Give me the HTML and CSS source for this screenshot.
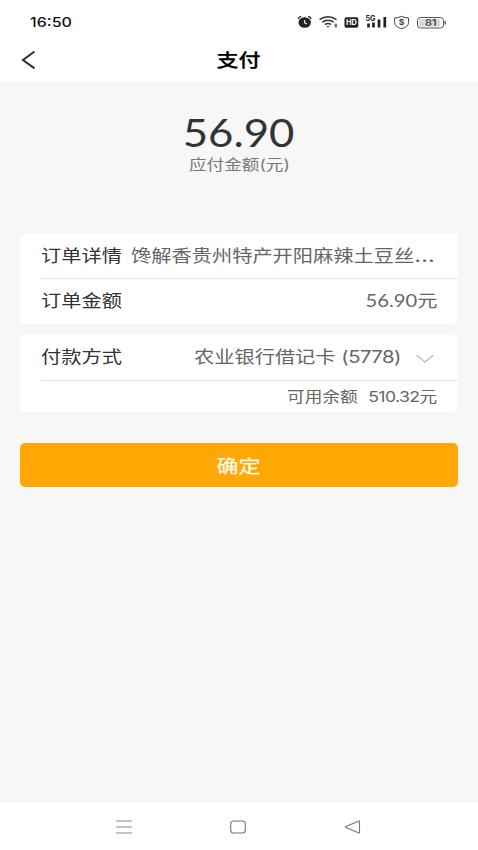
FILE: index.html
```html
<!DOCTYPE html>
<html lang="zh-CN">
<head>
<meta charset="utf-8">
<title>支付</title>
<link rel="stylesheet" href="styles.css">
</head>
<body>
<header class="top">
  <div class="status">
    <span class="wide clock">16:50</span>
    <svg class="status-icons" width="152" height="18" viewBox="0 0 152 18">
      <g fill="#222" stroke="none">
        <ellipse cx="8.7" cy="9.5" rx="6.2" ry="5.2"/>
        <path d="M2.300 6Q2.800 3.700 5.300 3.300M15.100 6Q14.600 3.700 12.100 3.300" fill="none" stroke="#222" stroke-width="1.300"/>
        <path d="M8.700 7v3l2.300 1" fill="none" stroke="#fff" stroke-width="1.100"/>
      </g>
      <g fill="none" stroke="#333" stroke-width="1.600">
        <path d="M23.500 6.600Q32 0.800 40.500 6.600"/>
        <path d="M26.300 9.200Q32 5.200 37.700 9.200"/>
        <path d="M29 11.700Q32 9.400 35 11.700"/>
      </g>
      <path d="M30.300 13h3.400L32 14.600z" fill="#333"/>
      <rect x="38.500" y="10.500" width="2.600" height="4" rx="1" fill="#777"/>
      <rect x="48.500" y="4.300" width="13.800" height="10.400" rx="1.800" fill="#222"/>
      <text class="hd" x="50" y="12.300" textLength="10.900" lengthAdjust="spacingAndGlyphs">HD</text>
      <text class="g5" x="69.500" y="8" textLength="10" lengthAdjust="spacingAndGlyphs">5G</text>
      <path d="M72.500 10.500v4M77.500 9.500v5M83 6.500v8M88.800 4v10.500" fill="none" stroke="#222" stroke-width="2.700"/>
      <path d="M105.500 3.300Q109 5 112.600 5V9.500Q112.600 13.700 105.500 15.700Q98.600 13.700 98.600 9.500V5Q102 5 105.500 3.300z" fill="none" stroke="#444" stroke-width="1"/>
      <text class="shield" x="102.800" y="12.400" textLength="5.600" lengthAdjust="spacingAndGlyphs">$</text>
      <rect x="121.500" y="4.500" width="26" height="10.500" rx="3" fill="#fff" stroke="#555"/>
      <rect x="123" y="6" width="21" height="7.500" rx="1.500" fill="#d8d8d8"/>
      <path d="M149.200 8v3.500" stroke="#555" stroke-width="1.300"/>
      <text class="pct" x="129" y="13" textLength="11.500" lengthAdjust="spacingAndGlyphs">81</text>
    </svg>
  </div>
  <div class="titlebar">
    <svg class="back" width="16" height="20" viewBox="0 0 16 20"><path d="M14.500 1.500L3 10L14.500 18.300" fill="none" stroke="#333" stroke-width="2.100"/></svg>
    <h1 class="wide title">支付</h1>
  </div>
</header>
<main class="content">
  <section class="amount">
    <div class="wide total">56.90</div>
    <div class="wide caption">应付金额(元)</div>
  </section>
  <section class="card order">
    <div class="row detail">
      <span class="wide label">订单详情</span>
      <span class="wide value goods">馋解香贵州特产开阳麻辣土豆丝<span class="dots">…</span></span>
    </div>
    <div class="row sum">
      <span class="wide label">订单金额</span>
      <span class="wide value right"><span class="num">56.90</span>元</span>
    </div>
  </section>
  <section class="card method">
    <div class="row bank">
      <span class="wide label">付款方式</span>
      <span class="wide value right bankname">农业银行借记卡 <span class="account">(5778)</span></span>
      <svg class="chevron" width="20" height="10" viewBox="0 0 20 10"><path d="M1.500 1L10 8L18.500 1" fill="none" stroke="#bdbdbd" stroke-width="1.400"/></svg>
    </div>
    <div class="row balance">
      <span class="wide value right small"><span class="balance-label">可用余额</span><span class="balance-num">510.32</span>元</span>
    </div>
  </section>
  <button class="confirm"><span class="wide">确定</span></button>
</main>
<nav class="sysnav">
  <svg width="18" height="16" viewBox="0 0 18 16"><path d="M1 2h16M1 8h16M1 14h16" fill="none" stroke="#8a8a8a" stroke-width="1.100"/></svg>
  <svg width="18" height="16" viewBox="0 0 18 16"><rect x="1.700" y="2" width="14.600" height="12" rx="3" fill="none" stroke="#777" stroke-width="1.100"/></svg>
  <svg width="18" height="16" viewBox="0 0 18 16"><path d="M15.500 2.200V13.800Q15.500 14.200 15 14L1.800 8.500Q1 8 1.800 7.500L15 2Q15.500 1.800 15.500 2.200z" fill="none" stroke="#777" stroke-width="1.100"/></svg>
</nav>
</body>
</html>
```
FILE: styles.css
```css
* { box-sizing: border-box; }
body {
  margin: 0;
  height: 850px;
  display: flex;
  flex-direction: column;
  overflow: hidden;
  background: #f7f7f7;
  color: #333;
  font-family: Inter, "Noto Sans CJK SC", sans-serif;
}
/* The interface type is set wider than its natural proportions. */
.wide {
  display: inline-block;
  white-space: nowrap;
  transform: scaleX(1.19);
  transform-origin: left center;
}
.top { height: 82px; background: #fff; }
.status {
  height: 40px;
  padding: 4px 30px 0 30px;
  display: flex;
  align-items: center;
  justify-content: space-between;
}
.clock { font-size: 13.5px; font-weight: 500; color: #111; transform: scaleX(1.19); }
.status-icons { flex: none; margin: -1px 0.5px 0 0; }
.hd { font: bold 7.5px Inter, sans-serif; fill: #fff; }
.g5 { font: bold 7.5px Inter, sans-serif; fill: #222; }
.shield { font: bold 8px Inter, sans-serif; fill: #444; }
.pct { font: 500 9px Inter, sans-serif; fill: #333; }
.titlebar {
  height: 40px;
  padding: 0 20px;
  display: grid;
  grid-template-columns: 1fr auto 1fr;
  align-items: center;
}
.title {
  margin: 0;
  font-size: 18.5px;
  line-height: 28px;
  font-weight: 500;
  color: #000;
  -webkit-text-stroke: 0.25px #000;
  transform-origin: center;
}
.content { flex: 1; padding: 0 20px; }
.amount {
  height: 152px;
  padding-top: 28px;
  display: flex;
  flex-direction: column;
  align-items: center;
}
.amount .wide { transform-origin: center; }
.amount .total {
  font-family: Lato, sans-serif;
  font-size: 38px;
  line-height: 44px;
  transform: scaleX(1.15);
}
.caption { font-size: 14.8px; line-height: 22px; color: #777; }
.card { background: #fff; border-radius: 5px; padding-left: 21px; }
.order { height: 90px; }
.row {
  height: 45px;
  padding-right: 21px;
  display: flex;
  align-items: center;
  font-size: 17px;
  line-height: 24px;
}
.detail { padding-bottom: 0; border-bottom: 1px solid #e6e6e6; gap: 22px; }
.sum { padding-bottom: 2px; }
.label { color: #333; }
.value { color: #666; }
.dots { font-size: 20px; line-height: 1; }
.right { margin-left: auto; transform-origin: right center; }
.num { font-family: Lato, sans-serif; }
.method { height: 77px; margin-top: 11px; }
.bank { height: 46px; padding-bottom: 2px; border-bottom: 1px solid #e6e6e6; }
.account { letter-spacing: -0.42px; }
.chevron { margin: 4px 2px 0 14.5px; flex: none; }
.balance { height: 31px; }
.small { font-size: 14.8px; }
.balance-label { margin-right: 9px; }
.balance-num { letter-spacing: -0.5px; }
.confirm {
  display: flex;
  width: 100%;
  height: 44px;
  margin-top: 31px;
  padding: 0;
  align-items: center;
  justify-content: center;
  border: 0;
  border-radius: 5px;
  background: #ffa805;
  color: #fffbe8;
  font: 400 18.5px/28px "Noto Sans CJK SC", sans-serif;
  -webkit-text-stroke: 0.25px #fffbe8;
}
.confirm .wide { transform-origin: center; }
.sysnav {
  height: 47px;
  padding: 0 116.5px 0 115px;
  display: flex;
  align-items: center;
  justify-content: space-between;
  background: #fff;
}
.sysnav svg { flex: none; }
```
